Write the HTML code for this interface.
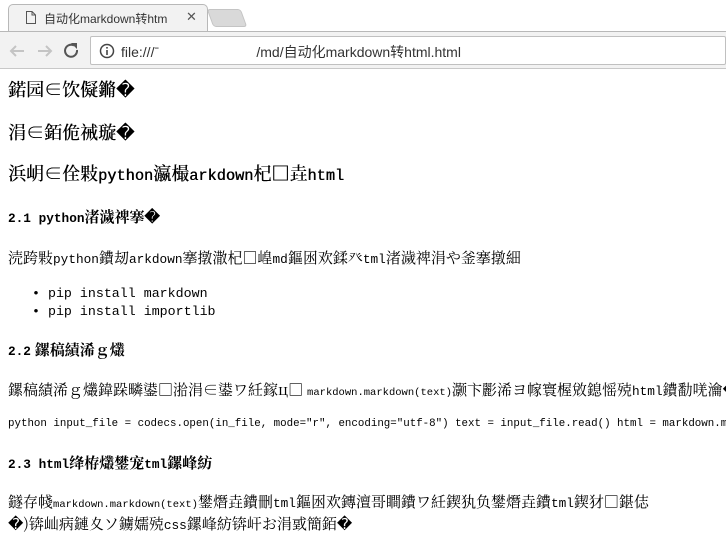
<!DOCTYPE html>
<html><head><meta charset="utf-8">
<style>
*{margin:0;padding:0;box-sizing:border-box}
html,body{width:726px;height:542px;overflow:hidden}
body{background:#fff;position:relative;font-family:"Noto Serif CJK SC",serif;color:#000}
.tabbar{position:absolute;left:0;top:0;width:726px;height:31px;background:#fff}
.tab{position:absolute;left:8px;top:4px;width:200px;height:28px;background:#f2f2f2;border:1px solid #b8b8b8;border-bottom:none;border-radius:5px 5px 0 0}
.tabtxt{position:absolute;left:44px;top:10px;font:12px "Liberation Sans","Noto Sans CJK SC",sans-serif;color:#333;white-space:nowrap;width:132px;overflow:hidden}
.tab2{position:absolute;left:210px;top:9px;width:34px;height:18px;background:#d9d9d9;border:1px solid #c4c4c4;border-radius:3px;transform:skewX(20deg)}
.toolbar{position:absolute;left:0;top:31px;width:726px;height:38px;background:#f2f2f2;border-top:1px solid #b8b8b8;border-bottom:1px solid #c8c8c8}
.omni{position:absolute;left:90px;top:4px;right:0;height:29px;background:#fff;border:1px solid #c0c0c0;border-radius:2px}
.url{position:absolute;left:30px;top:5px;font:14px "Liberation Sans","Noto Sans CJK SC",sans-serif;color:#333;white-space:pre}
.t{position:absolute;left:8px;right:0;overflow:hidden;white-space:nowrap;font-family:"Noto Serif CJK SC",serif;line-height:1.2}
h2.t{font-size:18px;font-weight:normal;text-shadow:0.4px 0 0 #000}
h3.t{font-size:15px;font-weight:bold}
.p{font-size:15px}
.l{font-family:"Liberation Mono",monospace;font-size:0.85em}
.s{font-family:"Liberation Mono",monospace;font-size:0.7em}
.m{font-family:"Liberation Mono",monospace;font-size:13.3px}
</style></head><body>
<div class="tabbar">
<div class="tab"></div>
<svg style="position:absolute;left:26px;top:11px" width="10" height="13"><path d="M0.5 0.5H6L9.5 4V12.5H0.5Z M6 0.5V4H9.5" fill="none" stroke="#555"/></svg>
<div class="tabtxt">自动化markdown转htm</div>
<div style="position:absolute;left:186px;top:9px;font:13px 'Liberation Sans';color:#555">✕</div>
<div class="tab2"></div>
</div>
<div class="toolbar">
<svg style="position:absolute;left:8px;top:10px" width="70" height="18"><path d="M16 9H3M8 4L3 9L8 14" stroke="#c4c4c4" stroke-width="2" fill="none"/><path d="M30 9H43M38 4L43 9L38 14" stroke="#c4c4c4" stroke-width="2" fill="none"/><path d="M69 8A6 6 0 1 1 66 3.5" stroke="#555" stroke-width="2" fill="none"/><path d="M63 1L69 1L69 7Z" fill="#555"/></svg>
<div class="omni">
<svg style="position:absolute;left:8px;top:6px" width="16" height="16"><circle cx="8" cy="8" r="6.5" fill="none" stroke="#444" stroke-width="1.5"/><rect x="7.2" y="7" width="1.6" height="5" fill="#444"/><rect x="7.2" y="4" width="1.6" height="1.6" fill="#444"/></svg>
<div class="url">file:///ˉ                         /md/自动化markdown转html.html</div>
</div>
</div>
<h2 class="t" style="top:79px">鍩园∈饮儗鏅�</h2>
<h2 class="t" style="top:122px">涓∈銆佹祴璇�</h2>
<h2 class="t" style="top:163px">浜岄∈佺敤<span class="l">python</span>瀛樶<span class="l">arkdown</span>杞□垚<span class="l">html</span></h2>
<h3 class="t" style="top:208px"><span class="l">2.1 python</span>渚濊禆搴�</h3>
<div class="t p" style="top:249px">涜跨敤<span class="l">python</span>鐨刼<span class="l">arkdown</span>搴撴潵杞□崲<span class="l">md</span>鏂囦欢鍒癶<span class="l">tml</span>渚濊禆涓や釜搴撴細</div>
<div class="t m" style="top:286px;left:32px">•&nbsp;pip install markdown</div>
<div class="t m" style="top:304px;left:32px">•&nbsp;pip install importlib</div>
<h3 class="t" style="top:341px"><span class="l">2.2</span> 鏍稿績浠ｇ爜</h3>
<div class="t p" style="top:381px">鏍稿績浠ｇ爜鍏跺疄鍙□湁涓∈鍙ワ紝鎵ц□ <span class="s">markdown.markdown(text)</span>灏卞彲浠ヨ幏寰楃敓鎴愮殑<span class="l">html</span>鐨勫唴瀹�</div>
<div class="t" style="top:418px;font-family:'Liberation Mono',monospace;font-size:10.8px">python input_file = codecs.open(in_file, mode="r", encoding="utf-8") text = input_file.read() html = markdown.markdown(text)</div>
<h3 class="t" style="top:454px"><span class="l">2.3 html</span>绛栫爜鐢宠<span class="l">tml</span>鏍峰紡</h3>
<div class="t p" style="top:493px">鐩存帴<span class="s">markdown.markdown(text)</span>鐢熸垚鐨刪<span class="l">tml</span>鏂囦欢鏄澶哥瞷鐨ワ紝鍥犱负鐢熸垚鐨<span class="l">tml</span>鍥犲□鍖俧</div>
<div class="t p" style="top:515px">�)锛屾病鏈夊ソ鐪嬬殑<span class="l">css</span>鏍峰紡锛屽お涓戜簡銆�</div>
</body></html>
